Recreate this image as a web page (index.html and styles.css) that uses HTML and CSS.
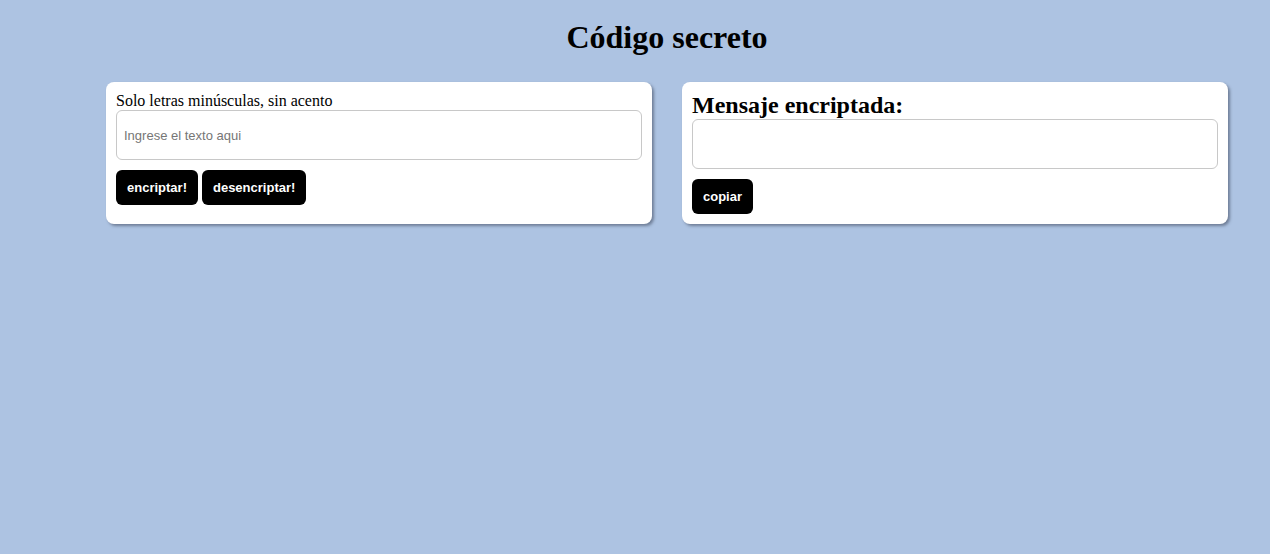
FILE: index.html
```html
<!DOCTYPE html>
<html lang="es">
<head>
<meta charset="utf-8">
<title>Código secreto</title>
<link rel="stylesheet" href="styles.css">
</head>
<body>
<main class="page">
  <h1 class="title">Código secreto</h1>
  <div class="cards">
    <section class="card">
      <label class="label" for="entrada">Solo letras minúsculas, sin acento</label>
      <input class="field" id="entrada" type="text" placeholder="Ingrese el texto aqui">
      <div class="actions">
        <button class="btn">encriptar!</button>
        <button class="btn">desencriptar!</button>
      </div>
    </section>
    <section class="card">
      <h2 class="subtitle">Mensaje encriptada:</h2>
      <textarea class="field" readonly></textarea>
      <div class="actions">
        <button class="btn">copiar</button>
      </div>
    </section>
  </div>
</main>
</body>
</html>
```

FILE: styles.css
```css
html, body {
  margin: 0;
  padding: 0;
}
body {
  background: #adc3e2;
  font-family: "Liberation Serif", "Times New Roman", serif;
  color: #000;
  min-height: 554px;
}
.page {
  width: 1122px;
  margin-left: 106px;
  padding-top: 21px;
}
.title {
  margin: 0 0 28px;
  text-align: center;
  font-size: 32px;
  line-height: 33px;
  font-weight: bold;
}
.cards {
  display: flex;
  gap: 30px;
  align-items: stretch;
}
.card {
  flex: 1;
  background: #fff;
  border-radius: 8px;
  padding: 10px;
  box-shadow: 2px 2px 3px rgba(60, 70, 90, 0.55);
  display: flex;
  flex-direction: column;
}
.label {
  font-size: 16px;
  line-height: 18px;
}
.subtitle {
  margin: 0;
  font-size: 24px;
  line-height: 27px;
  font-weight: bold;
}
.field {
  box-sizing: border-box;
  width: 100%;
  height: 50px;
  margin: 0;
  border: 1px solid #c8c8c8;
  border-radius: 6px;
  padding: 0 7px;
  font-family: "Liberation Sans", Arial, sans-serif;
  font-size: 13px;
  background: #fff;
  resize: none;
  outline: none;
}
.field::placeholder {
  color: #767676;
}
.actions {
  display: flex;
  gap: 4px;
  margin-top: 10px;
}
.btn {
  height: 35px;
  padding: 0 11px;
  background: #000;
  color: #fff;
  border: none;
  border-radius: 6px;
  font-family: "Liberation Sans", Arial, sans-serif;
  font-size: 13px;
  font-weight: bold;
}
```
